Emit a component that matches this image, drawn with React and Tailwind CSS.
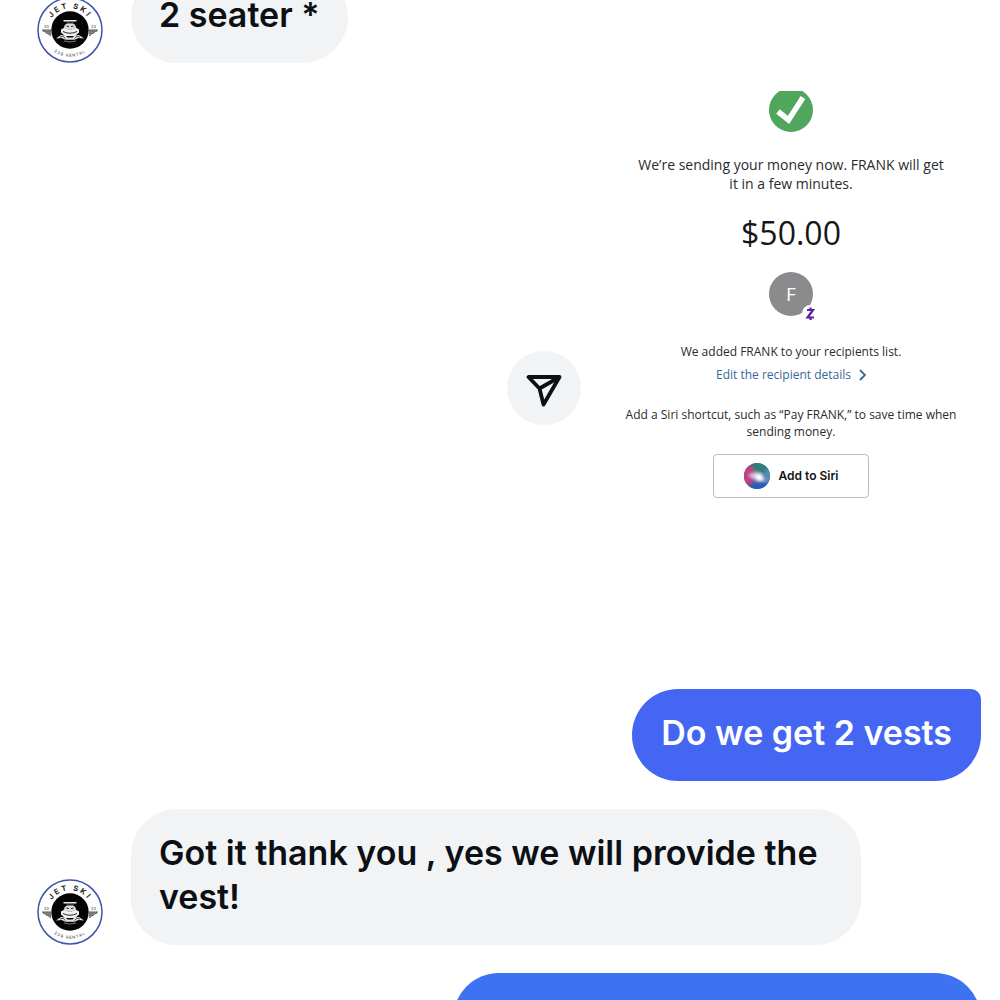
import React from "react"

function Avatar({ id }) {
  return (
    <svg viewBox="0 0 66 66" className="w-[66px] h-[66px] shrink-0" role="img" aria-label="Jet Ski 239 Rental">
      <defs>
        <path id={`${id}-top`} d="M 11.4 36 A 21.8 21.8 0 1 1 54.6 36" />
        <path id={`${id}-bottom`} d="M 6.2 33 A 26.8 26.8 0 0 0 59.8 33" />
      </defs>
      <circle cx="33" cy="33" r="32" fill="#fff" stroke="#3d53a8" strokeWidth="1.5" />
      <circle cx="33" cy="33" r="18.7" fill="#050505" />
      <text className="font-['Inter',sans-serif] font-bold" fontSize="7.5" fill="#222" textAnchor="middle" letterSpacing="2.1">
        <textPath href={`#${id}-top`} startOffset="50%">JET SKI</textPath>
      </text>
      <text className="font-['Inter',sans-serif] font-medium" fontSize="4" fill="#555" textAnchor="middle" letterSpacing="1">
        <textPath href={`#${id}-bottom`} startOffset="50%">239 RENTAL</textPath>
      </text>
      <g className="font-['Inter',sans-serif]" fontSize="3.8" fill="#777" textAnchor="middle">
        <text x="9.5" y="31">20</text>
        <text x="56.5" y="31">23</text>
      </g>
      <path d="M5 32.5h9v6.5c-1.5-.3-2.5-1-3-2-1.500 0-2.300-.8-2.800-1.800-1.700 0-2.800-1.200-3.200-2.700z" fill="#555" />
      <path d="M61 32.500h-9v6.500c1.500-.3 2.500-1 3-2 1.500 0 2.300-.8 2.800-1.800 1.700 0 2.800-1.200 3.200-2.700z" fill="#555" />
      <path d="M7 34h7M9 35.800h5M11.500 37.400h2.500M59 34h-7M57 35.800h-5M54.500 37.400h-2.500" stroke="#ddd" strokeWidth=".5" />
      <path d="M27 23.8h12" stroke="#e8e8e8" strokeWidth="1.4" strokeLinecap="round" />
      <path d="M29 24l1.5 2h5l1.500-2" fill="none" stroke="#888" strokeWidth=".6" />
      <path d="M27 31q0-3.500 3-4.500h6q3 1 3 4.500l-6 2z" fill="#ddd" />
      <path d="M29.500 29l2.500.6M36.500 29l-2.500.6" stroke="#111" strokeWidth=".9" />
      <path d="M24 32.500l3-1.800 6 2.300 6-2.300 3 1.800 0 3-4 3.500h-10l-4-3.500z" fill="#f0f0f0" />
      <path d="M26 34.500q7 3.500 14 0" fill="none" stroke="#111" strokeWidth=".9" />
      <path d="M19 41.500l5-3.500 4.500.5 2 2h5l2-2 4.500-.5 5 3.500-5.500-.5-4 1.800h-9l-4-1.800z" fill="#e2e2e2" />
      <path d="M23 40l3-.8 2.500 2.300M43 40l-3-.8-2.500 2.300" fill="none" stroke="#111" strokeWidth=".7" />
      <path d="M27 44q6 2 12 0" fill="none" stroke="#aaa" strokeWidth=".7" />
    </svg>
  )
}

function ReceivedMessage({ id, children }) {
  return (
    <div className="flex items-end gap-7 pl-[37px]">
      <Avatar id={id} />
      <p className="max-w-[730px] rounded-[46px] bg-[#f2f3f5] px-7 pt-[22px] pb-[26px] text-[#0c1014]">{children}</p>
    </div>
  )
}

function PaymentScreenshot() {
  return (
    <div className="flex w-[380px] flex-col items-center overflow-hidden rounded-3xl bg-white pb-[163px] text-center font-['Open_Sans',sans-serif] font-normal text-[#2b2b2e]">
      <svg viewBox="0 3 44 41" className="h-[41px] w-11" aria-hidden="true">
        <circle cx="22" cy="22" r="22" fill="#50a75b" />
        <path d="M9 23.5l10.5 8.500L34 9.500" fill="none" stroke="#fff" strokeWidth="5.5" />
      </svg>
      <p className="mt-[23px] w-[314px] text-[14px] leading-[19px]">We’re sending your money now. FRANK will get it in a few minutes.</p>
      <p className="mt-5 text-[32px] leading-[40px] text-[#17171a]">$50.00</p>
      <svg viewBox="0 0 52 52" className="mt-[19px] ml-2 h-[52px] w-[52px]" role="img" aria-label="FRANK, Zelle">
        <circle cx="22" cy="22" r="22" fill="#8b8b8d" />
        <text x="22" y="28.5" fontSize="19" textAnchor="middle" fill="#fff">F</text>
        <circle cx="41.5" cy="41.5" r="8.5" fill="#fff" />
        <path d="M38 38h6l-5.5 7.5h6.500M41.500 35.500v2.500M41.500 45.500v2.500" fill="none" stroke="#5c1fa5" strokeWidth="2.2" />
      </svg>
      <p className="mt-[17px] text-[12px] leading-[22px]">We added FRANK to your recipients list.</p>
      <a href="#recipient" className="flex items-center gap-2 text-[12px] leading-[23px] text-[#39679b]">
        Edit the recipient details
        <svg viewBox="0 0 7 12" className="h-3 w-[7px]" aria-hidden="true">
          <path d="M1 1l5 5-5 5" fill="none" stroke="currentColor" strokeWidth="1.8" />
        </svg>
      </a>
      <p className="mt-5 w-[360px] text-[12px] leading-[17px]">Add a Siri shortcut, such as “Pay FRANK,” to save time when sending money.</p>
      <button className="mt-[14px] flex h-11 w-[156px] items-center justify-center gap-[9px] rounded-[4px] border border-[#bdbdbd] bg-white font-['Inter',sans-serif] text-[12px] font-semibold text-[#111]">
        <svg viewBox="0 0 26 26" className="h-[26px] w-[26px]" aria-hidden="true">
          <defs>
            <clipPath id="orb"><circle cx="13" cy="13" r="13" /></clipPath>
            <filter id="soft"><feGaussianBlur stdDeviation="1.8" /></filter>
          </defs>
          <g clipPath="url(#orb)">
            <rect width="26" height="26" fill="#4c5585" />
            <g filter="url(#soft)">
              <ellipse cx="3" cy="12" rx="8" ry="10" fill="#c03f83" />
              <ellipse cx="17" cy="4" rx="9" ry="6" fill="#2f7f78" />
              <ellipse cx="17" cy="23" rx="11" ry="5" fill="#2861b5" />
              <ellipse cx="24" cy="13" rx="4" ry="7" fill="#4d8fb8" />
              <path d="M4 12l9-3 9 9-9 0z" fill="#d8c8ee" />
              <circle cx="15.5" cy="14" r="3.5" fill="#fff" />
            </g>
          </g>
        </svg>
        Add to Siri
      </button>
    </div>
  )
}

export default function App() {
  return (
    <main className="h-screen overflow-hidden bg-white font-['Inter',sans-serif] text-[34px] leading-[44px] font-semibold">
      <div className="-mt-[29px] flex flex-col gap-7 pr-[19px]">
        <ReceivedMessage id="first">2 seater *</ReceivedMessage>

        <div className="flex items-start justify-end gap-5">
          <button aria-label="Share" className="mt-[260px] flex h-[74px] w-[74px] items-center justify-center rounded-full bg-[#f2f3f5] text-[#0c1014]">
            <svg viewBox="0 0 36 34" className="mt-1 h-[34px] w-9" fill="none" stroke="currentColor" strokeWidth="3.8" strokeLinejoin="round" aria-hidden="true">
              <path d="M2.5 4H33.5L17.5 31.5L13.5 15.5Z" />
              <path d="M13.5 15.5L33.5 4" />
            </svg>
          </button>
          <PaymentScreenshot />
        </div>

        <p className="self-end rounded-[46px] rounded-tr-[10px] bg-[#4466f2] px-[29px] pt-[22px] pb-[26px] text-white">Do we get 2 vests</p>

        <ReceivedMessage id="second">Got it thank you , yes we will provide the vest!</ReceivedMessage>

        <div className="h-[92px] w-[528px] self-end rounded-[46px] bg-[#3d72f3]" />
      </div>
    </main>
  )
}
